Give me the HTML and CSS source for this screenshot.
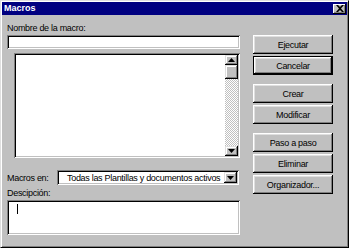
FILE: index.html
```html
<!DOCTYPE html>
<html lang="es">
<head>
    <meta charset="UTF-8">
    <title>Macros</title>
    <link rel="stylesheet" href="styles.css">
</head>
<body>
    <div class="dialog">
        <div class="titlebar">
            <span class="title">Macros</span>
            <div class="close-btn">
                <svg width="8" height="7" viewBox="0 0 8 7"><path d="M0 0h2l2 2 2-2h2L5 3.5 8 7H6L4 5 2 7H0l3-3.5z" fill="#000"/></svg>
            </div>
        </div>
        <div class="content">
            <div class="left">
                <div class="lbl name-lbl">Nombre de la macro:</div>
                <div class="field name-field"></div>
                <div class="list">
                    <div class="list-area"></div>
                    <div class="scrollbar">
                        <div class="sb-btn">
                            <svg width="7" height="4" viewBox="0 0 7 4"><path d="M3.5 0L7 4H0z" fill="#000"/></svg>
                        </div>
                        <div class="sb-thumb"></div>
                        <div class="sb-track"></div>
                        <div class="sb-btn">
                            <svg width="7" height="4" viewBox="0 0 7 4"><path d="M0 0h7L3.5 4z" fill="#000"/></svg>
                        </div>
                    </div>
                </div>
                <div class="macros-row">
                    <span class="lbl">Macros en:</span>
                    <div class="combo">
                        <span class="combo-text">Todas las Plantillas y documentos activos</span>
                        <div class="sb-btn combo-btn">
                            <svg width="7" height="4" viewBox="0 0 7 4"><path d="M0 0h7L3.5 4z" fill="#000"/></svg>
                        </div>
                    </div>
                </div>
                <div class="lbl desc-lbl">Descipción:</div>
                <div class="field desc-field"><span class="caret"></span></div>
            </div>
            <div class="buttons">
                <div class="btn">Ejecutar</div>
                <div class="btn btn-default">Cancelar</div>
                <div class="btn group-start">Crear</div>
                <div class="btn">Modificar</div>
                <div class="btn group-start">Paso a paso</div>
                <div class="btn">Eliminar</div>
                <div class="btn">Organizador...</div>
            </div>
        </div>
    </div>
</body>
</html>
```

FILE: styles.css
```css
* {
    margin: 0;
    padding: 0;
    box-sizing: border-box;
}

body {
    font-family: 'Liberation Sans', Arial, sans-serif;
    font-size: 9px;
    letter-spacing: -0.3px;
    color: #000;
    background: #fff;
}

.dialog {
    width: 349px;
    height: 248px;
    background: #c0c0c0;
    border: 1px solid;
    border-color: #dfdfdf #000 #000 #dfdfdf;
    box-shadow: inset 1px 1px #fff, inset -1px -1px #808080;
    padding: 1px 1px;
}

.titlebar {
    height: 13px;
    background: #000080;
    display: flex;
    align-items: center;
    justify-content: space-between;
    padding: 0 1px 0 2px;
}

.title {
    color: #fff;
    font-weight: bold;
    font-size: 9px;
    letter-spacing: 0;
    line-height: 13px;
}

.close-btn {
    width: 13px;
    height: 10px;
    background: #c0c0c0;
    box-shadow: inset -1px -1px #000, inset 1px 1px #fff, inset -2px -2px #808080;
    display: flex;
    align-items: center;
    justify-content: center;
    padding-bottom: 1px;
}

.content {
    display: flex;
    padding: 7px 0 0 5px;
}

.left {
    width: 233px;
    display: flex;
    flex-direction: column;
}

.lbl {
    line-height: 12px;
    white-space: nowrap;
}

.field {
    background: #fff;
    box-shadow: inset 1px 1px #808080, inset -1px -1px #fff, inset 2px 2px #000, inset -2px -2px #c0c0c0;
}

.name-field {
    height: 14px;
    margin-top: 1px;
}

.list {
    margin: 4px 0 0 7px;
    height: 105px;
    display: flex;
    padding: 2px;
    background: #fff;
    box-shadow: inset 1px 1px #808080, inset -1px -1px #fff, inset 2px 2px #000, inset -2px -2px #c0c0c0;
}

.list-area {
    flex: 1;
}

.scrollbar {
    width: 13px;
    display: flex;
    flex-direction: column;
}

.sb-btn {
    width: 13px;
    height: 10px;
    flex-shrink: 0;
    background: #c0c0c0;
    box-shadow: inset -1px -1px #000, inset 1px 1px #dfdfdf, inset -2px -2px #808080, inset 2px 2px #fff;
    display: flex;
    align-items: center;
    justify-content: center;
}

.sb-thumb {
    height: 14px;
    background: #c0c0c0;
    box-shadow: inset -1px -1px #000, inset 1px 1px #dfdfdf, inset -2px -2px #808080, inset 2px 2px #fff;
}

.sb-track {
    flex: 1;
    background: repeating-conic-gradient(#fff 0 25%, #c0c0c0 0 50%) 0 0 / 2px 2px;
}

.macros-row {
    display: flex;
    align-items: center;
    margin-top: 12px;
}

.macros-row .lbl {
    width: 50px;
}

.combo {
    flex: 1;
    height: 15px;
    margin-right: 1px;
    background: #fff;
    display: flex;
    align-items: center;
    justify-content: space-between;
    padding: 2px;
    box-shadow: inset 1px 1px #808080, inset -1px -1px #fff, inset 2px 2px #000, inset -2px -2px #c0c0c0;
}

.combo-text {
    padding-left: 8px;
    white-space: nowrap;
}

.combo-btn {
    height: 11px;
}

.desc-lbl {
    margin-top: 2px;
}

.desc-field {
    height: 35px;
    margin-top: 1px;
    padding: 4px 0 0 10px;
}

.caret {
    display: block;
    width: 1px;
    height: 10px;
    background: #000;
}

.buttons {
    margin-left: 13px;
    margin-top: 13px;
    width: 80px;
    display: flex;
    flex-direction: column;
    gap: 2px;
}

.btn {
    height: 19px;
    background: #c0c0c0;
    box-shadow: inset -1px -1px #000, inset 1px 1px #fff, inset -2px -2px #808080, inset 2px 2px #dfdfdf;
    display: flex;
    align-items: center;
    justify-content: center;
    white-space: nowrap;
}

.btn-default {
    border: 1px solid #000;
}

.group-start {
    margin-top: 7px;
}
```
